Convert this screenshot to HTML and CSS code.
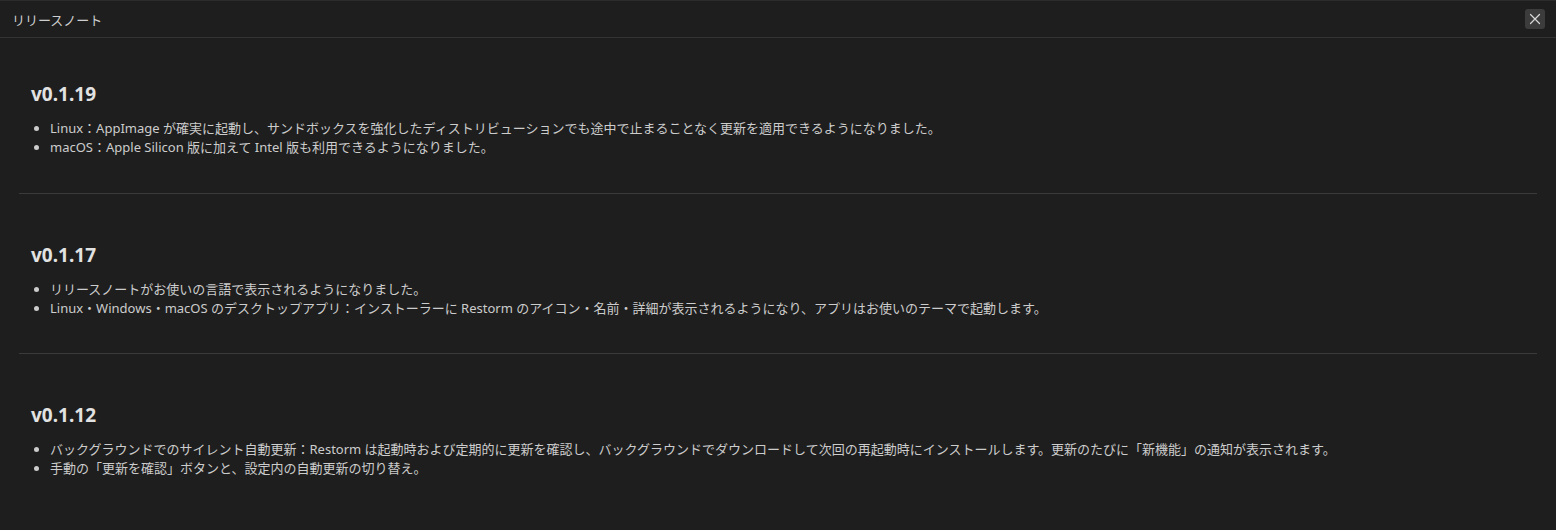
FILE: index.html
```html
<!DOCTYPE html>
<html lang="ja">
<head>
<meta charset="utf-8">
<title>リリースノート</title>
<link rel="stylesheet" href="styles.css">
</head>
<body>
<div class="dialog">
  <header class="dialog-header">
    <span class="dialog-title">リリースノート</span>
    <button class="close-btn" aria-label="閉じる">
      <svg width="12" height="12" viewBox="0 0 12 12"><path d="M1.5 1.5 L10.5 10.5 M10.5 1.5 L1.5 10.5" stroke="#d8d8d8" stroke-width="1.2" fill="none" stroke-linecap="round"/></svg>
    </button>
  </header>
  <main class="notes">
    <section class="release first">
      <h2 class="version">v0.1.19</h2>
      <ul class="changes">
        <li>Linux：AppImage が確実に起動し、サンドボックスを強化したディストリビューションでも途中で止まることなく更新を適用できるようになりました。</li>
        <li>macOS：Apple Silicon 版に加えて Intel 版も利用できるようになりました。</li>
      </ul>
    </section>
    <hr class="sep">
    <section class="release">
      <h2 class="version">v0.1.17</h2>
      <ul class="changes">
        <li>リリースノートがお使いの言語で表示されるようになりました。</li>
        <li>Linux・Windows・macOS のデスクトップアプリ：インストーラーに Restorm のアイコン・名前・詳細が表示されるようになり、アプリはお使いのテーマで起動します。</li>
      </ul>
    </section>
    <hr class="sep">
    <section class="release">
      <h2 class="version">v0.1.12</h2>
      <ul class="changes">
        <li>バックグラウンドでのサイレント自動更新：Restorm は起動時および定期的に更新を確認し、バックグラウンドでダウンロードして次回の再起動時にインストールします。更新のたびに「新機能」の通知が表示されます。</li>
        <li>手動の「更新を確認」ボタンと、設定内の自動更新の切り替え。</li>
      </ul>
    </section>
  </main>
</div>
</body>
</html>
```
FILE: styles.css
```css
html, body {
  margin: 0;
  padding: 0;
  background: #1e1e1e;
}
body {
  font-family: "Noto Sans", "Noto Sans CJK JP", sans-serif;
  color: #cccccc;
  height: 530px;
  overflow: hidden;
}
.dialog {
  border-top: 1px solid #2c2c2c;
  background: #1e1e1e;
}
.dialog-header {
  height: 36px;
  border-bottom: 1px solid #333333;
  display: flex;
  align-items: center;
  justify-content: space-between;
  padding: 0 11px 0 12px;
}
.dialog-title {
  font-size: 13px;
  color: #cfcfcf;
}
.close-btn {
  width: 20px;
  height: 20px;
  padding: 0;
  border: none;
  border-radius: 3px;
  background: #3c3c3c;
  display: flex;
  align-items: center;
  justify-content: center;
}
.notes {
  padding: 0 19px;
}
.release {
  padding: 49px 12px 35px;
}
.release.first {
  padding-top: 44px;
  padding-bottom: 36px;
}
.version {
  margin: 0 0 13px;
  font-size: 19px;
  line-height: 24px;
  font-weight: 700;
  color: #e2e2e2;
}
.changes {
  margin: 0;
  padding-left: 19px;
  font-size: 13px;
  line-height: 19px;
  color: #cccccc;
}
.sep {
  margin: 0;
  border: none;
  height: 1px;
  background: #3a3a3a;
}
```
